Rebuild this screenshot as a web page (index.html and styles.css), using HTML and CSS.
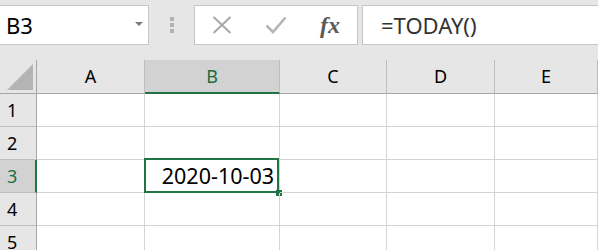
FILE: index.html
```html
<!DOCTYPE html>
<html lang="en">
<head>
    <meta charset="UTF-8">
    <meta name="viewport" content="width=device-width, initial-scale=1.0">
    <title>Sheet1 - TODAY</title>
    <link rel="stylesheet" href="styles.css">
</head>
<body>

<div class="workbook">
    <!-- Name box and formula bar -->
    <div class="toolbar">
        <div class="name-box">
            <span>B3</span>
            <span class="dropdown"></span>
        </div>
        <div class="grip">
            <span></span><span></span><span></span>
        </div>
        <div class="formula-buttons">
            <span class="fbtn">
                <svg width="20" height="18" viewBox="0 0 20 18">
                    <path d="M1.5 1 L18.5 17 M18.5 1 L1.5 17" stroke="#a8a8a8" stroke-width="2" fill="none"/>
                </svg>
            </span>
            <span class="fbtn">
                <svg width="22" height="18" viewBox="0 0 22 18">
                    <path d="M1.5 9.5 L8 16 L20.5 1.5" stroke="#b5b5b5" stroke-width="2.6" fill="none"/>
                </svg>
            </span>
            <span class="fbtn fx">fx</span>
        </div>
        <div class="formula-bar">=TODAY()</div>
    </div>

    <!-- Sheet grid -->
    <div class="sheet">
        <div class="corner"><span class="triangle"></span></div>
        <div class="col-head">A</div>
        <div class="col-head selected">B</div>
        <div class="col-head">C</div>
        <div class="col-head">D</div>
        <div class="col-head">E</div>

        <div class="row-head">1</div>
        <div class="cell"></div><div class="cell"></div><div class="cell"></div><div class="cell"></div><div class="cell"></div>

        <div class="row-head">2</div>
        <div class="cell"></div><div class="cell"></div><div class="cell"></div><div class="cell"></div><div class="cell"></div>

        <div class="row-head selected">3</div>
        <div class="cell"></div>
        <div class="cell active">
            2020-10-03
            <span class="selection"></span>
            <span class="fill-handle"></span>
        </div>
        <div class="cell"></div><div class="cell"></div><div class="cell"></div>

        <div class="row-head">4</div>
        <div class="cell"></div><div class="cell"></div><div class="cell"></div><div class="cell"></div><div class="cell"></div>

        <div class="row-head">5</div>
        <div class="cell"></div><div class="cell"></div><div class="cell"></div><div class="cell"></div><div class="cell"></div>
    </div>
</div>

</body>
</html>
```

FILE: styles.css
```css
/* Basic reset */
* {
    margin: 0;
    padding: 0;
    box-sizing: border-box;
}

body {
    font-family: "Noto Sans", "Open Sans", sans-serif;
    background-color: #ffffff;
    width: 598px;
    height: 250px;
    overflow: hidden;
}

.workbook {
    width: 100%;
}

/* Toolbar with name box and formula bar */
.toolbar {
    display: flex;
    align-items: flex-start;
    height: 60px;
    padding-top: 5px;
    background-color: #e6e6e6;
}

.name-box {
    display: flex;
    align-items: center;
    justify-content: space-between;
    width: 150px;
    height: 40px;
    margin-left: -1px;
    padding: 0 5px 0 6px;
    background-color: white;
    border: 1px solid #c6c6c6;
    font-size: 22px;
    line-height: 38px;
    color: #000;
}

.name-box .dropdown {
    width: 0;
    height: 0;
    border-left: 4px solid transparent;
    border-right: 4px solid transparent;
    border-top: 4px solid #7a7a7a;
    margin-top: -3px;
}

.grip {
    width: 45px;
    height: 40px;
    display: flex;
    flex-direction: column;
    align-items: center;
    gap: 2px;
    padding-top: 12px;
}

.grip span {
    width: 4px;
    height: 4px;
    background-color: #b3b3b3;
}

.formula-buttons {
    display: flex;
    width: 164px;
    height: 40px;
    background-color: white;
    border: 1px solid #c6c6c6;
}

.fbtn {
    flex: 1;
    display: flex;
    align-items: center;
    justify-content: center;
}

.fbtn.fx {
    font-family: "Liberation Serif", "DejaVu Serif", serif;
    font-style: italic;
    font-weight: bold;
    font-size: 24px;
    color: #5a5a5a;
    padding-top: 1px;
}

.formula-bar {
    flex: 1;
    height: 40px;
    margin-left: 4px;
    margin-right: -2px;
    padding-left: 18px;
    background-color: white;
    border: 1px solid #c6c6c6;
    font-size: 22px;
    line-height: 38px;
    color: #333333;
}

/* Sheet grid */
.sheet {
    display: grid;
    grid-template-columns: 37px 108px 135px 107px 108px 1fr;
    grid-template-rows: 34px repeat(5, 33px);
}

.corner {
    background-color: #e6e6e6;
    border-right: 1px solid #a6a6a6;
    border-bottom: 1px solid #a6a6a6;
    padding: 4px 0 0 7px;
}

.corner .triangle {
    display: block;
    width: 0;
    height: 0;
    border-left: 26px solid transparent;
    border-bottom: 26px solid #b4b4b4;
}

.col-head {
    background-color: #e6e6e6;
    border-right: 1px solid #bdbdbd;
    border-bottom: 1px solid #a6a6a6;
    text-align: center;
    font-size: 18px;
    line-height: 33px;
    color: #000;
}

.col-head.selected {
    background-color: #d2d2d2;
    border-bottom: 2px solid #217346;
    color: #1e6b41;
}

.row-head {
    background-color: #e6e6e6;
    border-right: 1px solid #a6a6a6;
    border-bottom: 1px solid #bdbdbd;
    padding-left: 7px;
    font-size: 18px;
    line-height: 32px;
    color: #000;
}

.row-head.selected {
    background-color: #d2d2d2;
    border-right: 2px solid #217346;
    color: #1e6b41;
}

.cell {
    position: relative;
    border-right: 1px solid #d4d4d4;
    border-bottom: 1px solid #d4d4d4;
}

.cell.active {
    text-align: right;
    padding-right: 5px;
    font-size: 21.5px;
    line-height: 32px;
    color: #000;
}

/* Active cell outline drawn over the grid lines */
.cell .selection {
    position: absolute;
    top: -2px;
    left: -1px;
    right: 0;
    bottom: -1px;
    border: 2px solid #217346;
}

.cell .fill-handle {
    position: absolute;
    right: -3px;
    bottom: -4px;
    width: 6px;
    height: 6px;
    background-color: #217346;
}
```
